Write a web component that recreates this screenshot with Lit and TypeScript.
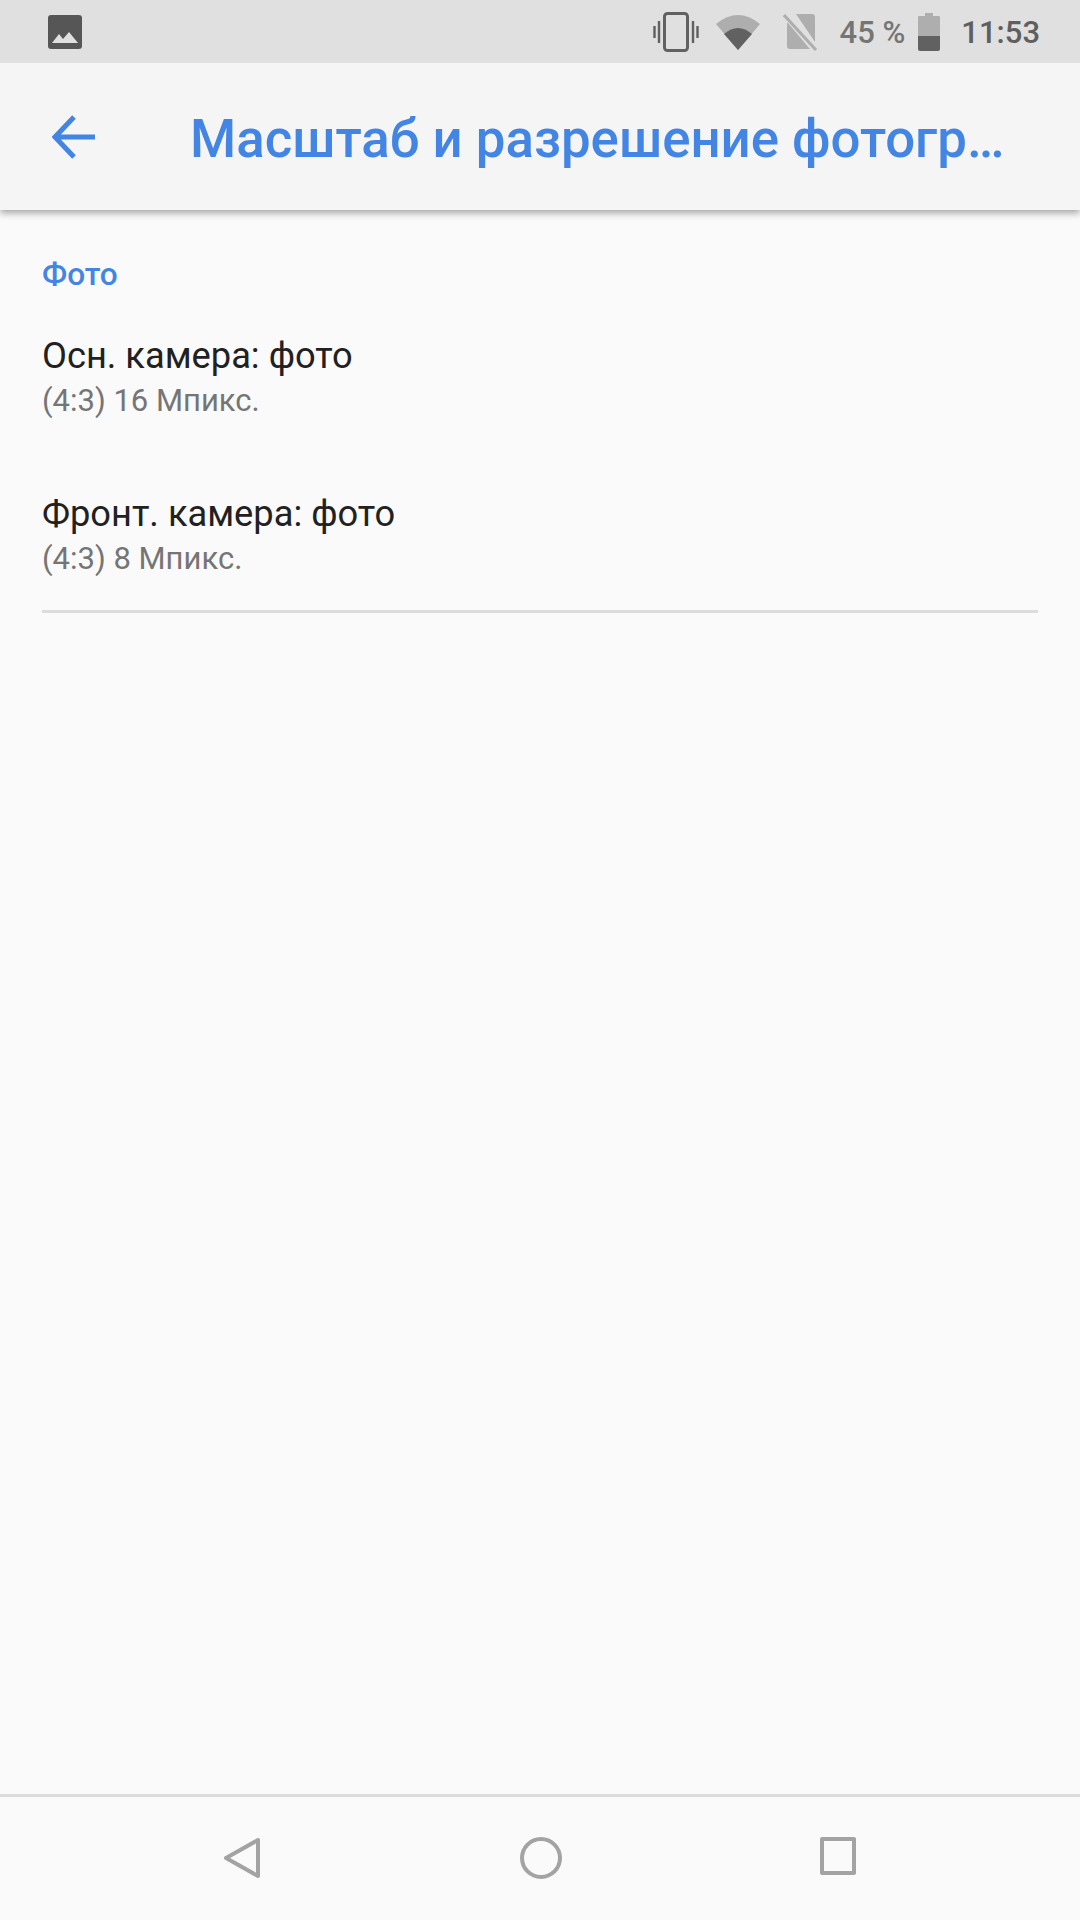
import { LitElement, html, css } from "lit";
import { customElement } from "lit/decorators.js";

@customElement("app-root")
export class AppRoot extends LitElement {
  static styles = css`
    :host {
      display: flex;
      flex-direction: column;
      width: 1080px;
      height: 1920px;
      background: #fafafa;
      font-family: Roboto, "Noto Sans", sans-serif;
      overflow: hidden;
    }
    .status {
      height: 63px;
      flex: none;
      background: #e0e0e0;
      display: flex;
      align-items: center;
      padding: 0 40px 0 48px;
      position: relative;
      z-index: 1;
    }
    .status svg { display: block; flex: none; }
    .spacer { flex: 1; }
    .pct { font-size: 31px; font-weight: 500; margin: 2px 0 0 21px; color: #757575; }
    .batt { margin-left: 13px; }
    .time { font-size: 31px; font-weight: 500; margin: 2px 0 0 21px; color: #5f5f5f; }
    .wifi { margin-left: 16px; }
    .sim { margin-left: 22px; }
    .toolbar {
      height: 147px;
      flex: none;
      background: #f5f5f5;
      display: flex;
      align-items: center;
      padding-left: 52px;
      box-shadow: 0 3px 7px rgba(0, 0, 0, 0.35);
      position: relative;
    }
    .toolbar svg { display: block; flex: none; }
    .title {
      margin: 4px 0 0 94px;
      font-size: 52.8px;
      line-height: 62px;
      font-weight: 500;
      color: #4285e4;
      white-space: nowrap;
    }
    .content { flex: 1; padding: 47px 42px 0; }
    .section { font-size: 31.6px; font-weight: 500; color: #4285e4; line-height: 36px; }
    .item { margin-top: 39px; }
    .item + .item { margin-top: 68px; }
    .item-title { font-size: 36.25px; color: #212121; line-height: 48px; }
    .item-sub { font-size: 31px; color: #757575; line-height: 42px; }
    .divider { height: 3px; background: #dcdcdc; margin-top: 30px; }
    .nav {
      height: 126px;
      flex: none;
      border-top: 3px solid #dcdcdc;
      display: flex;
      align-items: flex-start;
      padding-top: 40px;
      box-sizing: border-box;
      padding-left: 223px;
    }
    .nav svg { display: block; flex: none; }
    .home { margin-left: 259px; }
    .recent { margin-left: 258px; }
  `;

  render() {
    return html`
      <div class="status">
        <svg width="34" height="34" viewBox="0 0 34 34">
          <rect width="34" height="34" rx="3" fill="#565656"/>
          <path d="M4 28 L11 19 L15 24 L21 17 L30 28 Z" fill="#e0e0e0"/>
        </svg>
        <div class="spacer"></div>
        <svg width="46" height="40" viewBox="0 0 46 40" fill="none" stroke="#616161">
          <rect x="11.5" y="1.5" width="23" height="37" rx="3" stroke-width="3"/>
          <path d="M6 9v22M1.5 14v12M40 9v22M44.5 14v12" stroke-width="2.4"/>
        </svg>
        <svg class="wifi" width="46" height="38" viewBox="0 0 46 38">
          <path d="M1 11 Q23 -7 45 11 L23 37 Z" fill="#aeaeae"/>
          <path d="M9 21 Q23 9 37 21 L23 37 Z" fill="#616161"/>
        </svg>
        <svg class="sim" width="36" height="38" viewBox="0 0 36 38">
          <path d="M13 1 H29 Q32 1 32 4 V29 Z M5 10 L27 36 H7 Q4 36 4 33 V10 Z" fill="#aeaeae"/>
          <path d="M1 2 L33 37" stroke="#aeaeae" stroke-width="3"/>
        </svg>
        <span class="pct">45 %</span>
        <svg class="batt" width="22" height="38" viewBox="0 0 22 38">
          <path d="M7 0 H15 V3 H21 Q22 3 22 4 V23 H0 V4 Q0 3 1 3 H7 Z" fill="#aeaeae"/>
          <path d="M0 23 H22 V36 Q22 38 20 38 H2 Q0 38 0 36 Z" fill="#616161"/>
        </svg>
        <span class="time">11:53</span>
      </div>
      <div class="toolbar">
        <svg width="44" height="44" viewBox="0 0 44 44" fill="none" stroke="#4285e4" stroke-width="5">
          <path d="M43 22 H4 M22 2 L3 22 L22 42" stroke-linejoin="miter"/>
        </svg>
        <span class="title">Масштаб и разрешение фотогр…</span>
      </div>
      <div class="content">
        <div class="section">Фото</div>
        <div class="item">
          <div class="item-title">Осн. камера: фото</div>
          <div class="item-sub">(4:3) 16 Мпикс.</div>
        </div>
        <div class="item">
          <div class="item-title">Фронт. камера: фото</div>
          <div class="item-sub">(4:3) 8 Мпикс.</div>
        </div>
        <div class="divider"></div>
      </div>
      <div class="nav">
        <svg width="38" height="42" viewBox="0 0 38 42" fill="none" stroke="#a3a3a3" stroke-width="4" stroke-linejoin="round">
          <path d="M35 3 V39 L3 21 Z"/>
        </svg>
        <svg class="home" width="42" height="42" viewBox="0 0 42 42" fill="none" stroke="#a3a3a3" stroke-width="4">
          <circle cx="21" cy="21" r="19"/>
        </svg>
        <svg class="recent" width="36" height="38" viewBox="0 0 36 38" fill="none" stroke="#a3a3a3" stroke-width="4" stroke-linejoin="round">
          <rect x="2" y="2" width="32" height="34"/>
        </svg>
      </div>
    `;
  }
}
